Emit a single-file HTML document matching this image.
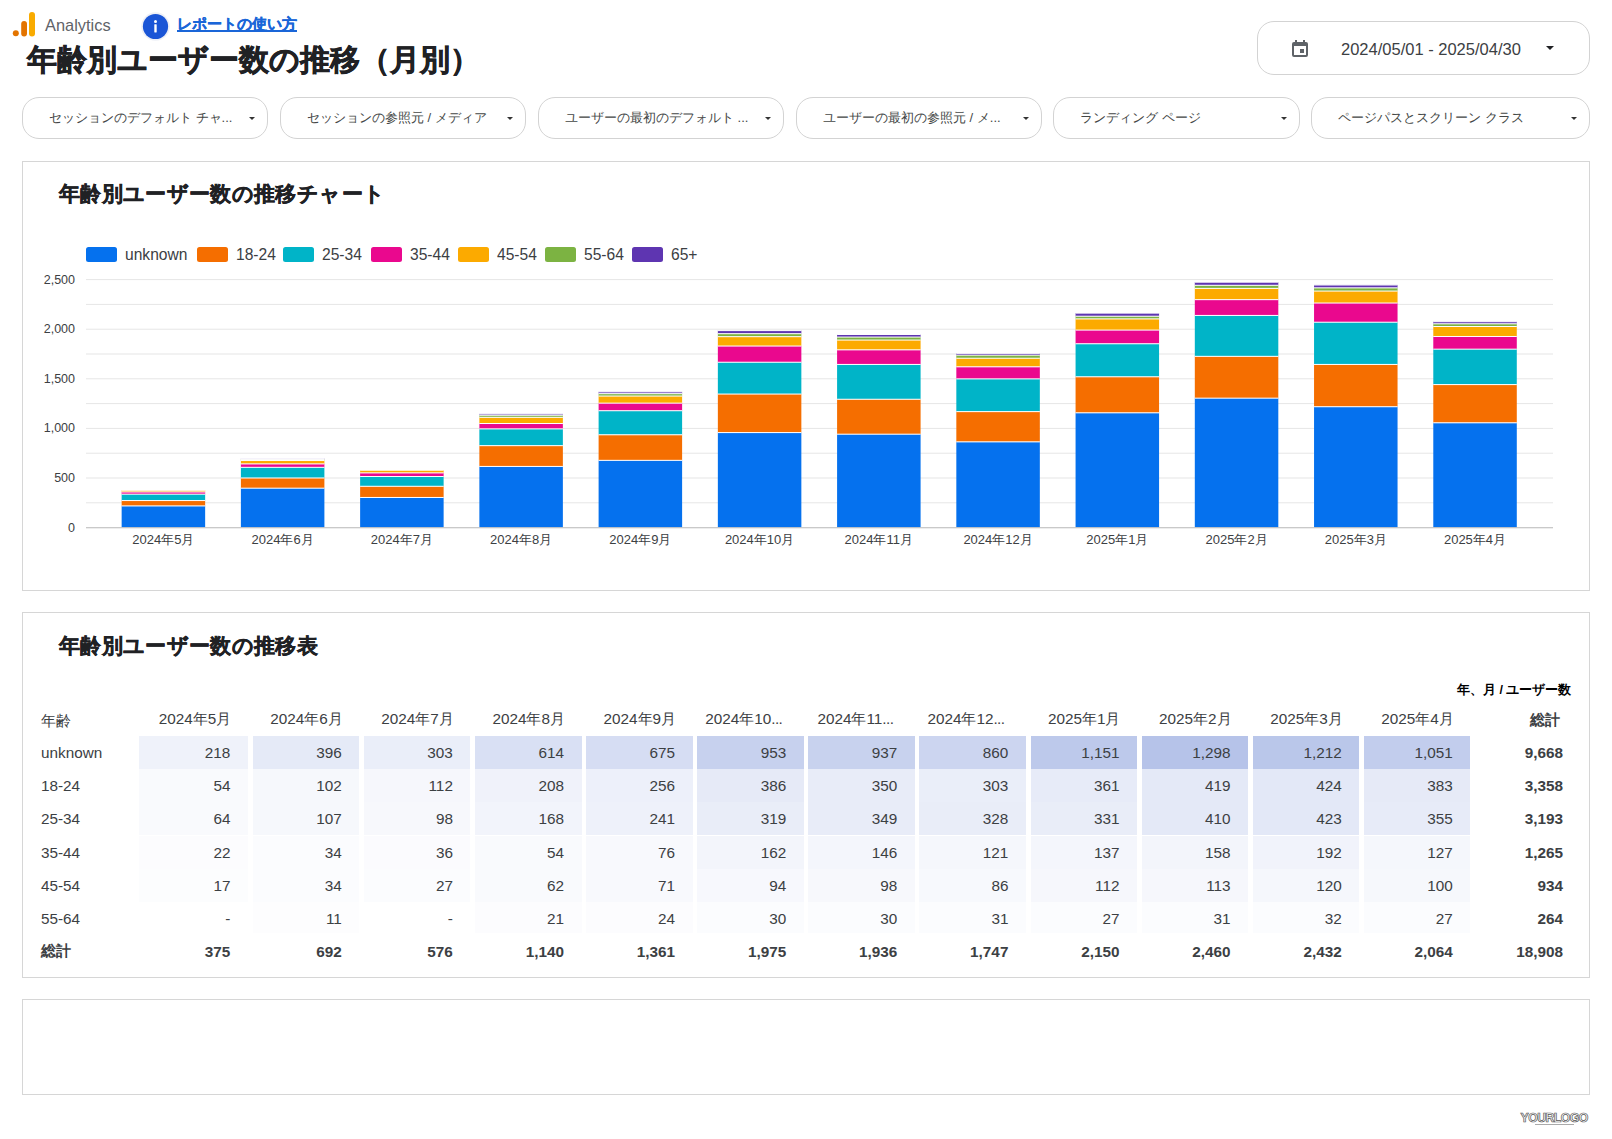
<!DOCTYPE html><html lang="ja"><head><meta charset="utf-8"><style>
*{box-sizing:border-box}
html,body{margin:0;padding:0;background:#fff}
body{width:1612px;height:1139px;position:relative;overflow:hidden;font-family:"Liberation Sans",sans-serif;color:#3c4043}
.abs{position:absolute;white-space:nowrap}
.card{position:absolute;border:1px solid #d6d6d6;background:#fff}
.chip{position:absolute;top:97px;height:42px;border:1px solid #d3d3d3;border-radius:17px;background:#fff}
.chip span{position:absolute;left:26px;top:11px;font-size:13px;letter-spacing:0px;color:#444746}
.chip i{position:absolute;right:12px;top:18.5px;width:0;height:0;border-left:3px solid transparent;border-right:3px solid transparent;border-top:3.5px solid #333}
.ct{font-size:20.6px;letter-spacing:0.35px;font-weight:bold;color:#202124;-webkit-text-stroke:0.4px #202124}
</style></head><body>
<svg class="abs" style="left:12px;top:12px" width="24" height="26" viewBox="0 0 24 26">
<rect x="17" y="0" width="6" height="24.5" rx="3" fill="#f9ab00"/>
<rect x="9.2" y="9" width="5.8" height="15.5" rx="2.9" fill="#e37400"/>
<circle cx="3.8" cy="21.3" r="3" fill="#e37400"/></svg>
<div class="abs" style="left:45px;top:16px;font-size:16.4px;color:#5f6368">Analytics</div>
<svg class="abs" style="left:141px;top:12px" width="29" height="29" viewBox="0 0 29 29">
<circle cx="14.5" cy="14.5" r="14.3" fill="#eef0f6"/><circle cx="14.5" cy="14.5" r="12.6" fill="#1a55d6"/>
<rect x="13.3" y="12.3" width="2.4" height="8.2" rx="0.4" fill="#fff"/><circle cx="14.5" cy="9.4" r="1.5" fill="#fff"/></svg>
<div class="abs" style="left:177px;top:14.5px;font-size:15px;font-weight:bold;color:#1a66d8;-webkit-text-stroke:0.3px #1a66d8;text-decoration:underline;text-decoration-thickness:1.5px;text-underline-offset:1px">レポートの使い方</div>
<div class="abs" style="left:27px;top:40px;font-size:30px;font-weight:bold;color:#202124;-webkit-text-stroke:0.6px #202124">年齢別ユーザー数の推移（月別）</div>
<div class="abs" style="left:1257px;top:21px;width:333px;height:54px;border:1px solid #d3d3d3;border-radius:17px"></div>
<svg class="abs" style="left:1291px;top:39px" width="18" height="19" viewBox="0 0 18 19"><path d="M4 1v2H3a2 2 0 0 0-2 2v11a2 2 0 0 0 2 2h12a2 2 0 0 0 2-2V5a2 2 0 0 0-2-2h-1V1h-2v2H6V1zM3 7h12v9H3z" fill="#5f6368"/><rect x="9" y="10" width="4" height="4" fill="#5f6368"/></svg>
<div class="abs" style="left:1341px;top:39.5px;font-size:16.5px;color:#3c4043">2024/05/01 - 2025/04/30</div>
<div class="abs" style="left:1546px;top:46px;width:0;height:0;border-left:4px solid transparent;border-right:4px solid transparent;border-top:4px solid #202124"></div>
<div class="chip" style="left:22px;width:246px"><span>セッションのデフォルト チャ...</span><i></i></div>
<div class="chip" style="left:280px;width:246px"><span>セッションの参照元 / メディア</span><i></i></div>
<div class="chip" style="left:538px;width:246px"><span>ユーザーの最初のデフォルト ...</span><i></i></div>
<div class="chip" style="left:796px;width:246px"><span>ユーザーの最初の参照元 / メ...</span><i></i></div>
<div class="chip" style="left:1053px;width:247px"><span>ランディング ページ</span><i></i></div>
<div class="chip" style="left:1311px;width:279px"><span>ページパスとスクリーン クラス</span><i></i></div>
<div class="card" style="left:22px;top:161px;width:1568px;height:430px"></div>
<div class="abs ct" style="left:59px;top:180px">年齢別ユーザー数の推移チャート</div>
<div class="abs" style="left:86px;top:246.5px;width:31px;height:15px;border-radius:2.5px;background:#0571ee"></div>
<div class="abs" style="left:125px;top:246px;font-size:15.6px;color:#3c4043">unknown</div>
<div class="abs" style="left:197px;top:246.5px;width:31px;height:15px;border-radius:2.5px;background:#f56e00"></div>
<div class="abs" style="left:236px;top:246px;font-size:15.6px;color:#3c4043">18-24</div>
<div class="abs" style="left:283px;top:246.5px;width:31px;height:15px;border-radius:2.5px;background:#00b4c8"></div>
<div class="abs" style="left:322px;top:246px;font-size:15.6px;color:#3c4043">25-34</div>
<div class="abs" style="left:371px;top:246.5px;width:31px;height:15px;border-radius:2.5px;background:#ea088e"></div>
<div class="abs" style="left:410px;top:246px;font-size:15.6px;color:#3c4043">35-44</div>
<div class="abs" style="left:458px;top:246.5px;width:31px;height:15px;border-radius:2.5px;background:#fcaa00"></div>
<div class="abs" style="left:497px;top:246px;font-size:15.6px;color:#3c4043">45-54</div>
<div class="abs" style="left:545px;top:246.5px;width:31px;height:15px;border-radius:2.5px;background:#7cb342"></div>
<div class="abs" style="left:584px;top:246px;font-size:15.6px;color:#3c4043">55-64</div>
<div class="abs" style="left:632px;top:246.5px;width:31px;height:15px;border-radius:2.5px;background:#5e35b1"></div>
<div class="abs" style="left:671px;top:246px;font-size:15.6px;color:#3c4043">65+</div>
<svg class="abs" style="left:0;top:0" width="1612" height="600"><rect x="86" y="502.30" width="1467" height="1" fill="#e6e6e6"/><rect x="86" y="477.50" width="1467" height="1" fill="#e6e6e6"/><rect x="86" y="452.70" width="1467" height="1" fill="#e6e6e6"/><rect x="86" y="427.90" width="1467" height="1" fill="#e6e6e6"/><rect x="86" y="403.10" width="1467" height="1" fill="#e6e6e6"/><rect x="86" y="378.30" width="1467" height="1" fill="#e6e6e6"/><rect x="86" y="353.50" width="1467" height="1" fill="#e6e6e6"/><rect x="86" y="328.70" width="1467" height="1" fill="#e6e6e6"/><rect x="86" y="303.90" width="1467" height="1" fill="#e6e6e6"/><rect x="86" y="279.10" width="1467" height="1" fill="#e6e6e6"/><rect x="121.65" y="505.84" width="83.5" height="21.76" fill="#0571ee"/><rect x="121.65" y="500.45" width="83.5" height="5.39" fill="#f56e00"/><rect x="121.65" y="494.07" width="83.5" height="6.39" fill="#00b4c8"/><rect x="121.65" y="491.87" width="83.5" height="2.20" fill="#ea088e"/><rect x="121.65" y="490.18" width="83.5" height="1.70" fill="#fcaa00"/><rect x="121.65" y="505.44" width="83.5" height="1" fill="#fff" fill-opacity="1"/><rect x="121.65" y="500.05" width="83.5" height="1" fill="#fff" fill-opacity="1"/><rect x="121.65" y="493.67" width="83.5" height="1" fill="#fff" fill-opacity="1"/><rect x="121.65" y="491.47" width="83.5" height="1" fill="#fff" fill-opacity="1"/><rect x="121.65" y="489.78" width="83.5" height="1" fill="#fff" fill-opacity="1"/><rect x="240.89" y="488.08" width="83.5" height="39.52" fill="#0571ee"/><rect x="240.89" y="477.90" width="83.5" height="10.18" fill="#f56e00"/><rect x="240.89" y="467.22" width="83.5" height="10.68" fill="#00b4c8"/><rect x="240.89" y="463.83" width="83.5" height="3.39" fill="#ea088e"/><rect x="240.89" y="460.43" width="83.5" height="3.39" fill="#fcaa00"/><rect x="240.89" y="459.34" width="83.5" height="1.10" fill="#7cb342"/><rect x="240.89" y="458.54" width="83.5" height="0.80" fill="#5e35b1"/><rect x="240.89" y="487.68" width="83.5" height="1" fill="#fff" fill-opacity="1"/><rect x="240.89" y="477.50" width="83.5" height="1" fill="#fff" fill-opacity="1"/><rect x="240.89" y="466.82" width="83.5" height="1" fill="#fff" fill-opacity="1"/><rect x="240.89" y="463.43" width="83.5" height="1" fill="#fff" fill-opacity="1"/><rect x="240.89" y="460.03" width="83.5" height="1" fill="#fff" fill-opacity="1"/><rect x="240.89" y="458.94" width="83.5" height="1" fill="#fff" fill-opacity="1"/><rect x="240.89" y="458.14" width="83.5" height="1" fill="#fff" fill-opacity="1"/><rect x="360.13" y="497.36" width="83.5" height="30.24" fill="#0571ee"/><rect x="360.13" y="486.18" width="83.5" height="11.18" fill="#f56e00"/><rect x="360.13" y="476.40" width="83.5" height="9.78" fill="#00b4c8"/><rect x="360.13" y="472.81" width="83.5" height="3.59" fill="#ea088e"/><rect x="360.13" y="470.12" width="83.5" height="2.69" fill="#fcaa00"/><rect x="360.13" y="496.96" width="83.5" height="1" fill="#fff" fill-opacity="1"/><rect x="360.13" y="485.78" width="83.5" height="1" fill="#fff" fill-opacity="1"/><rect x="360.13" y="476.00" width="83.5" height="1" fill="#fff" fill-opacity="1"/><rect x="360.13" y="472.41" width="83.5" height="1" fill="#fff" fill-opacity="1"/><rect x="360.13" y="469.72" width="83.5" height="1" fill="#fff" fill-opacity="1"/><rect x="479.37" y="466.32" width="83.5" height="61.28" fill="#0571ee"/><rect x="479.37" y="445.56" width="83.5" height="20.76" fill="#f56e00"/><rect x="479.37" y="428.80" width="83.5" height="16.77" fill="#00b4c8"/><rect x="479.37" y="423.41" width="83.5" height="5.39" fill="#ea088e"/><rect x="479.37" y="417.22" width="83.5" height="6.19" fill="#fcaa00"/><rect x="479.37" y="415.13" width="83.5" height="2.10" fill="#7cb342"/><rect x="479.37" y="413.83" width="83.5" height="1.30" fill="#5e35b1"/><rect x="479.37" y="465.92" width="83.5" height="1" fill="#fff" fill-opacity="1"/><rect x="479.37" y="445.16" width="83.5" height="1" fill="#fff" fill-opacity="1"/><rect x="479.37" y="428.40" width="83.5" height="1" fill="#fff" fill-opacity="1"/><rect x="479.37" y="423.01" width="83.5" height="1" fill="#fff" fill-opacity="1"/><rect x="479.37" y="416.82" width="83.5" height="1" fill="#fff" fill-opacity="1"/><rect x="479.37" y="414.73" width="83.5" height="1" fill="#fff" fill-opacity="1"/><rect x="479.37" y="413.43" width="83.5" height="1" fill="#fff" fill-opacity="1"/><rect x="598.61" y="460.24" width="83.5" height="67.36" fill="#0571ee"/><rect x="598.61" y="434.69" width="83.5" height="25.55" fill="#f56e00"/><rect x="598.61" y="410.63" width="83.5" height="24.05" fill="#00b4c8"/><rect x="598.61" y="403.05" width="83.5" height="7.58" fill="#ea088e"/><rect x="598.61" y="395.96" width="83.5" height="7.09" fill="#fcaa00"/><rect x="598.61" y="393.57" width="83.5" height="2.40" fill="#7cb342"/><rect x="598.61" y="391.77" width="83.5" height="1.80" fill="#5e35b1"/><rect x="598.61" y="459.84" width="83.5" height="1" fill="#fff" fill-opacity="1"/><rect x="598.61" y="434.29" width="83.5" height="1" fill="#fff" fill-opacity="1"/><rect x="598.61" y="410.23" width="83.5" height="1" fill="#fff" fill-opacity="1"/><rect x="598.61" y="402.65" width="83.5" height="1" fill="#fff" fill-opacity="1"/><rect x="598.61" y="395.56" width="83.5" height="1" fill="#fff" fill-opacity="1"/><rect x="598.61" y="393.17" width="83.5" height="1" fill="#fff" fill-opacity="1"/><rect x="598.61" y="391.37" width="83.5" height="1" fill="#fff" fill-opacity="1"/><rect x="717.85" y="432.49" width="83.5" height="95.11" fill="#0571ee"/><rect x="717.85" y="393.97" width="83.5" height="38.52" fill="#f56e00"/><rect x="717.85" y="362.13" width="83.5" height="31.84" fill="#00b4c8"/><rect x="717.85" y="345.96" width="83.5" height="16.17" fill="#ea088e"/><rect x="717.85" y="336.58" width="83.5" height="9.38" fill="#fcaa00"/><rect x="717.85" y="333.59" width="83.5" height="2.99" fill="#7cb342"/><rect x="717.85" y="330.50" width="83.5" height="3.09" fill="#5e35b1"/><rect x="717.85" y="432.09" width="83.5" height="1" fill="#fff" fill-opacity="1"/><rect x="717.85" y="393.57" width="83.5" height="1" fill="#fff" fill-opacity="1"/><rect x="717.85" y="361.73" width="83.5" height="1" fill="#fff" fill-opacity="1"/><rect x="717.85" y="345.56" width="83.5" height="1" fill="#fff" fill-opacity="1"/><rect x="717.85" y="336.18" width="83.5" height="1" fill="#fff" fill-opacity="1"/><rect x="717.85" y="333.19" width="83.5" height="1" fill="#fff" fill-opacity="1"/><rect x="717.85" y="330.10" width="83.5" height="1" fill="#fff" fill-opacity="1"/><rect x="837.09" y="434.09" width="83.5" height="93.51" fill="#0571ee"/><rect x="837.09" y="399.16" width="83.5" height="34.93" fill="#f56e00"/><rect x="837.09" y="364.33" width="83.5" height="34.83" fill="#00b4c8"/><rect x="837.09" y="349.76" width="83.5" height="14.57" fill="#ea088e"/><rect x="837.09" y="339.98" width="83.5" height="9.78" fill="#fcaa00"/><rect x="837.09" y="336.98" width="83.5" height="2.99" fill="#7cb342"/><rect x="837.09" y="334.39" width="83.5" height="2.59" fill="#5e35b1"/><rect x="837.09" y="433.69" width="83.5" height="1" fill="#fff" fill-opacity="1"/><rect x="837.09" y="398.76" width="83.5" height="1" fill="#fff" fill-opacity="1"/><rect x="837.09" y="363.93" width="83.5" height="1" fill="#fff" fill-opacity="1"/><rect x="837.09" y="349.36" width="83.5" height="1" fill="#fff" fill-opacity="1"/><rect x="837.09" y="339.58" width="83.5" height="1" fill="#fff" fill-opacity="1"/><rect x="837.09" y="336.58" width="83.5" height="1" fill="#fff" fill-opacity="1"/><rect x="837.09" y="333.99" width="83.5" height="1" fill="#fff" fill-opacity="1"/><rect x="956.33" y="441.77" width="83.5" height="85.83" fill="#0571ee"/><rect x="956.33" y="411.53" width="83.5" height="30.24" fill="#f56e00"/><rect x="956.33" y="378.80" width="83.5" height="32.73" fill="#00b4c8"/><rect x="956.33" y="366.72" width="83.5" height="12.08" fill="#ea088e"/><rect x="956.33" y="358.14" width="83.5" height="8.58" fill="#fcaa00"/><rect x="956.33" y="355.05" width="83.5" height="3.09" fill="#7cb342"/><rect x="956.33" y="353.25" width="83.5" height="1.80" fill="#5e35b1"/><rect x="956.33" y="441.37" width="83.5" height="1" fill="#fff" fill-opacity="1"/><rect x="956.33" y="411.13" width="83.5" height="1" fill="#fff" fill-opacity="1"/><rect x="956.33" y="378.40" width="83.5" height="1" fill="#fff" fill-opacity="1"/><rect x="956.33" y="366.32" width="83.5" height="1" fill="#fff" fill-opacity="1"/><rect x="956.33" y="357.74" width="83.5" height="1" fill="#fff" fill-opacity="1"/><rect x="956.33" y="354.65" width="83.5" height="1" fill="#fff" fill-opacity="1"/><rect x="956.33" y="352.85" width="83.5" height="1" fill="#fff" fill-opacity="1"/><rect x="1075.57" y="412.73" width="83.5" height="114.87" fill="#0571ee"/><rect x="1075.57" y="376.70" width="83.5" height="36.03" fill="#f56e00"/><rect x="1075.57" y="343.67" width="83.5" height="33.03" fill="#00b4c8"/><rect x="1075.57" y="330.00" width="83.5" height="13.67" fill="#ea088e"/><rect x="1075.57" y="318.82" width="83.5" height="11.18" fill="#fcaa00"/><rect x="1075.57" y="316.12" width="83.5" height="2.69" fill="#7cb342"/><rect x="1075.57" y="313.03" width="83.5" height="3.09" fill="#5e35b1"/><rect x="1075.57" y="412.33" width="83.5" height="1" fill="#fff" fill-opacity="1"/><rect x="1075.57" y="376.30" width="83.5" height="1" fill="#fff" fill-opacity="1"/><rect x="1075.57" y="343.27" width="83.5" height="1" fill="#fff" fill-opacity="1"/><rect x="1075.57" y="329.60" width="83.5" height="1" fill="#fff" fill-opacity="1"/><rect x="1075.57" y="318.42" width="83.5" height="1" fill="#fff" fill-opacity="1"/><rect x="1075.57" y="315.72" width="83.5" height="1" fill="#fff" fill-opacity="1"/><rect x="1075.57" y="312.63" width="83.5" height="1" fill="#fff" fill-opacity="1"/><rect x="1194.81" y="398.06" width="83.5" height="129.54" fill="#0571ee"/><rect x="1194.81" y="356.24" width="83.5" height="41.82" fill="#f56e00"/><rect x="1194.81" y="315.33" width="83.5" height="40.92" fill="#00b4c8"/><rect x="1194.81" y="299.56" width="83.5" height="15.77" fill="#ea088e"/><rect x="1194.81" y="288.28" width="83.5" height="11.28" fill="#fcaa00"/><rect x="1194.81" y="285.19" width="83.5" height="3.09" fill="#7cb342"/><rect x="1194.81" y="282.09" width="83.5" height="3.09" fill="#5e35b1"/><rect x="1194.81" y="397.66" width="83.5" height="1" fill="#fff" fill-opacity="1"/><rect x="1194.81" y="355.84" width="83.5" height="1" fill="#fff" fill-opacity="1"/><rect x="1194.81" y="314.93" width="83.5" height="1" fill="#fff" fill-opacity="1"/><rect x="1194.81" y="299.16" width="83.5" height="1" fill="#fff" fill-opacity="1"/><rect x="1194.81" y="287.88" width="83.5" height="1" fill="#fff" fill-opacity="1"/><rect x="1194.81" y="284.79" width="83.5" height="1" fill="#fff" fill-opacity="1"/><rect x="1194.81" y="281.69" width="83.5" height="1" fill="#fff" fill-opacity="1"/><rect x="1314.05" y="406.64" width="83.5" height="120.96" fill="#0571ee"/><rect x="1314.05" y="364.33" width="83.5" height="42.32" fill="#f56e00"/><rect x="1314.05" y="322.11" width="83.5" height="42.22" fill="#00b4c8"/><rect x="1314.05" y="302.95" width="83.5" height="19.16" fill="#ea088e"/><rect x="1314.05" y="290.97" width="83.5" height="11.98" fill="#fcaa00"/><rect x="1314.05" y="287.78" width="83.5" height="3.19" fill="#7cb342"/><rect x="1314.05" y="284.89" width="83.5" height="2.89" fill="#5e35b1"/><rect x="1314.05" y="406.24" width="83.5" height="1" fill="#fff" fill-opacity="1"/><rect x="1314.05" y="363.93" width="83.5" height="1" fill="#fff" fill-opacity="1"/><rect x="1314.05" y="321.71" width="83.5" height="1" fill="#fff" fill-opacity="1"/><rect x="1314.05" y="302.55" width="83.5" height="1" fill="#fff" fill-opacity="1"/><rect x="1314.05" y="290.57" width="83.5" height="1" fill="#fff" fill-opacity="1"/><rect x="1314.05" y="287.38" width="83.5" height="1" fill="#fff" fill-opacity="1"/><rect x="1314.05" y="284.49" width="83.5" height="1" fill="#fff" fill-opacity="1"/><rect x="1433.29" y="422.71" width="83.5" height="104.89" fill="#0571ee"/><rect x="1433.29" y="384.49" width="83.5" height="38.22" fill="#f56e00"/><rect x="1433.29" y="349.06" width="83.5" height="35.43" fill="#00b4c8"/><rect x="1433.29" y="336.38" width="83.5" height="12.67" fill="#ea088e"/><rect x="1433.29" y="326.40" width="83.5" height="9.98" fill="#fcaa00"/><rect x="1433.29" y="323.71" width="83.5" height="2.69" fill="#7cb342"/><rect x="1433.29" y="321.61" width="83.5" height="2.10" fill="#5e35b1"/><rect x="1433.29" y="422.31" width="83.5" height="1" fill="#fff" fill-opacity="1"/><rect x="1433.29" y="384.09" width="83.5" height="1" fill="#fff" fill-opacity="1"/><rect x="1433.29" y="348.66" width="83.5" height="1" fill="#fff" fill-opacity="1"/><rect x="1433.29" y="335.98" width="83.5" height="1" fill="#fff" fill-opacity="1"/><rect x="1433.29" y="326.00" width="83.5" height="1" fill="#fff" fill-opacity="1"/><rect x="1433.29" y="323.31" width="83.5" height="1" fill="#fff" fill-opacity="1"/><rect x="1433.29" y="321.21" width="83.5" height="1" fill="#fff" fill-opacity="1"/><rect x="86" y="527.10" width="1467" height="1.2" fill="#c4c4c4"/></svg>
<div class="abs" style="left:0;width:75px;text-align:right;top:520.6px;font-size:12.5px;color:#3c4043">0</div>
<div class="abs" style="left:0;width:75px;text-align:right;top:471.0px;font-size:12.5px;color:#3c4043">500</div>
<div class="abs" style="left:0;width:75px;text-align:right;top:421.4px;font-size:12.5px;color:#3c4043">1,000</div>
<div class="abs" style="left:0;width:75px;text-align:right;top:371.8px;font-size:12.5px;color:#3c4043">1,500</div>
<div class="abs" style="left:0;width:75px;text-align:right;top:322.2px;font-size:12.5px;color:#3c4043">2,000</div>
<div class="abs" style="left:0;width:75px;text-align:right;top:272.6px;font-size:12.5px;color:#3c4043">2,500</div>
<div class="abs" style="left:103.4px;width:120px;text-align:center;top:531px;font-size:13px;color:#3c4043">2024年5月</div>
<div class="abs" style="left:222.6px;width:120px;text-align:center;top:531px;font-size:13px;color:#3c4043">2024年6月</div>
<div class="abs" style="left:341.9px;width:120px;text-align:center;top:531px;font-size:13px;color:#3c4043">2024年7月</div>
<div class="abs" style="left:461.1px;width:120px;text-align:center;top:531px;font-size:13px;color:#3c4043">2024年8月</div>
<div class="abs" style="left:580.4px;width:120px;text-align:center;top:531px;font-size:13px;color:#3c4043">2024年9月</div>
<div class="abs" style="left:699.6px;width:120px;text-align:center;top:531px;font-size:13px;color:#3c4043">2024年10月</div>
<div class="abs" style="left:818.8px;width:120px;text-align:center;top:531px;font-size:13px;color:#3c4043">2024年11月</div>
<div class="abs" style="left:938.1px;width:120px;text-align:center;top:531px;font-size:13px;color:#3c4043">2024年12月</div>
<div class="abs" style="left:1057.3px;width:120px;text-align:center;top:531px;font-size:13px;color:#3c4043">2025年1月</div>
<div class="abs" style="left:1176.6px;width:120px;text-align:center;top:531px;font-size:13px;color:#3c4043">2025年2月</div>
<div class="abs" style="left:1295.8px;width:120px;text-align:center;top:531px;font-size:13px;color:#3c4043">2025年3月</div>
<div class="abs" style="left:1415.0px;width:120px;text-align:center;top:531px;font-size:13px;color:#3c4043">2025年4月</div>
<div class="card" style="left:22px;top:612px;width:1568px;height:366px"></div>
<div class="abs ct" style="left:59px;top:632px">年齢別ユーザー数の推移表</div>
<div class="abs" style="left:1457px;top:682px;font-size:12.5px;font-weight:bold;color:#000">年、月 / ユーザー数</div>
<div class="abs" style="left:41px;top:711px;font-size:15.3px;color:#3c4043">年齢</div>
<div class="abs" style="left:139.4px;width:108.5px;padding-right:16.5px;text-align:right;top:709px;font-size:15.3px;color:#3c4043">2024年5月</div>
<div class="abs" style="left:252.8px;width:106.5px;padding-right:16.5px;text-align:right;top:709px;font-size:15.3px;color:#3c4043">2024年6月</div>
<div class="abs" style="left:363.9px;width:106.5px;padding-right:16.5px;text-align:right;top:709px;font-size:15.3px;color:#3c4043">2024年7月</div>
<div class="abs" style="left:475.0px;width:106.5px;padding-right:16.5px;text-align:right;top:709px;font-size:15.3px;color:#3c4043">2024年8月</div>
<div class="abs" style="left:586.0999999999999px;width:106.5px;padding-right:16.5px;text-align:right;top:709px;font-size:15.3px;color:#3c4043">2024年9月</div>
<div class="abs" style="left:697.2px;width:106.5px;padding-right:21.5px;text-align:right;top:709px;font-size:15.3px;color:#3c4043">2024年10<span style="letter-spacing:-0.6px">...</span></div>
<div class="abs" style="left:808.3px;width:106.5px;padding-right:21.5px;text-align:right;top:709px;font-size:15.3px;color:#3c4043">2024年11<span style="letter-spacing:-0.6px">...</span></div>
<div class="abs" style="left:919.3999999999999px;width:106.5px;padding-right:21.5px;text-align:right;top:709px;font-size:15.3px;color:#3c4043">2024年12<span style="letter-spacing:-0.6px">...</span></div>
<div class="abs" style="left:1030.5px;width:106.5px;padding-right:16.5px;text-align:right;top:709px;font-size:15.3px;color:#3c4043">2025年1月</div>
<div class="abs" style="left:1141.6px;width:106.5px;padding-right:16.5px;text-align:right;top:709px;font-size:15.3px;color:#3c4043">2025年2月</div>
<div class="abs" style="left:1252.7px;width:106.5px;padding-right:16.5px;text-align:right;top:709px;font-size:15.3px;color:#3c4043">2025年3月</div>
<div class="abs" style="left:1363.8px;width:106.5px;padding-right:16.5px;text-align:right;top:709px;font-size:15.3px;color:#3c4043">2025年4月</div>
<div class="abs" style="left:1470px;width:101px;padding-right:11px;text-align:right;top:710px;font-size:15.3px;font-weight:bold;color:#3c4043">総計</div>
<div class="abs" style="left:41px;top:744.0px;font-size:15.3px;color:#3c4043">unknown</div>
<div class="abs" style="left:139.4px;width:108.5px;height:33.15px;top:736.0px;background:rgb(239, 242, 250);text-align:right;padding-right:17.5px;padding-top:8px;font-size:15.3px;color:#3c4043">218</div>
<div class="abs" style="left:252.8px;width:106.5px;height:33.15px;top:736.0px;background:rgb(229, 234, 247);text-align:right;padding-right:17.5px;padding-top:8px;font-size:15.3px;color:#3c4043">396</div>
<div class="abs" style="left:363.9px;width:106.5px;height:33.15px;top:736.0px;background:rgb(234, 238, 249);text-align:right;padding-right:17.5px;padding-top:8px;font-size:15.3px;color:#3c4043">303</div>
<div class="abs" style="left:475.0px;width:106.5px;height:33.15px;top:736.0px;background:rgb(217, 224, 244);text-align:right;padding-right:17.5px;padding-top:8px;font-size:15.3px;color:#3c4043">614</div>
<div class="abs" style="left:586.1px;width:106.5px;height:33.15px;top:736.0px;background:rgb(214, 221, 243);text-align:right;padding-right:17.5px;padding-top:8px;font-size:15.3px;color:#3c4043">675</div>
<div class="abs" style="left:697.2px;width:106.5px;height:33.15px;top:736.0px;background:rgb(199, 209, 238);text-align:right;padding-right:17.5px;padding-top:8px;font-size:15.3px;color:#3c4043">953</div>
<div class="abs" style="left:808.3px;width:106.5px;height:33.15px;top:736.0px;background:rgb(200, 210, 238);text-align:right;padding-right:17.5px;padding-top:8px;font-size:15.3px;color:#3c4043">937</div>
<div class="abs" style="left:919.4px;width:106.5px;height:33.15px;top:736.0px;background:rgb(204, 213, 240);text-align:right;padding-right:17.5px;padding-top:8px;font-size:15.3px;color:#3c4043">860</div>
<div class="abs" style="left:1030.5px;width:106.5px;height:33.15px;top:736.0px;background:rgb(189, 201, 235);text-align:right;padding-right:17.5px;padding-top:8px;font-size:15.3px;color:#3c4043">1,151</div>
<div class="abs" style="left:1141.6px;width:106.5px;height:33.15px;top:736.0px;background:rgb(182, 195, 233);text-align:right;padding-right:17.5px;padding-top:8px;font-size:15.3px;color:#3c4043">1,298</div>
<div class="abs" style="left:1252.7px;width:106.5px;height:33.15px;top:736.0px;background:rgb(186, 199, 234);text-align:right;padding-right:17.5px;padding-top:8px;font-size:15.3px;color:#3c4043">1,212</div>
<div class="abs" style="left:1363.8px;width:106.5px;height:33.15px;top:736.0px;background:rgb(194, 205, 237);text-align:right;padding-right:17.5px;padding-top:8px;font-size:15.3px;color:#3c4043">1,051</div>
<div class="abs" style="left:1470px;width:101px;padding-right:8px;text-align:right;top:744.0px;font-size:15.3px;font-weight:bold;color:#3c4043">9,668</div>
<div class="abs" style="left:41px;top:777.1px;font-size:15.3px;color:#3c4043">18-24</div>
<div class="abs" style="left:139.4px;width:108.5px;height:33.15px;top:769.1px;background:rgb(249, 250, 253);text-align:right;padding-right:17.5px;padding-top:8px;font-size:15.3px;color:#3c4043">54</div>
<div class="abs" style="left:252.8px;width:106.5px;height:33.15px;top:769.1px;background:rgb(246, 248, 252);text-align:right;padding-right:17.5px;padding-top:8px;font-size:15.3px;color:#3c4043">102</div>
<div class="abs" style="left:363.9px;width:106.5px;height:33.15px;top:769.1px;background:rgb(246, 247, 252);text-align:right;padding-right:17.5px;padding-top:8px;font-size:15.3px;color:#3c4043">112</div>
<div class="abs" style="left:475.0px;width:106.5px;height:33.15px;top:769.1px;background:rgb(240, 242, 250);text-align:right;padding-right:17.5px;padding-top:8px;font-size:15.3px;color:#3c4043">208</div>
<div class="abs" style="left:586.1px;width:106.5px;height:33.15px;top:769.1px;background:rgb(237, 240, 250);text-align:right;padding-right:17.5px;padding-top:8px;font-size:15.3px;color:#3c4043">256</div>
<div class="abs" style="left:697.2px;width:106.5px;height:33.15px;top:769.1px;background:rgb(230, 234, 247);text-align:right;padding-right:17.5px;padding-top:8px;font-size:15.3px;color:#3c4043">386</div>
<div class="abs" style="left:808.3px;width:106.5px;height:33.15px;top:769.1px;background:rgb(232, 236, 248);text-align:right;padding-right:17.5px;padding-top:8px;font-size:15.3px;color:#3c4043">350</div>
<div class="abs" style="left:919.4px;width:106.5px;height:33.15px;top:769.1px;background:rgb(234, 238, 249);text-align:right;padding-right:17.5px;padding-top:8px;font-size:15.3px;color:#3c4043">303</div>
<div class="abs" style="left:1030.5px;width:106.5px;height:33.15px;top:769.1px;background:rgb(231, 235, 248);text-align:right;padding-right:17.5px;padding-top:8px;font-size:15.3px;color:#3c4043">361</div>
<div class="abs" style="left:1141.6px;width:106.5px;height:33.15px;top:769.1px;background:rgb(228, 233, 247);text-align:right;padding-right:17.5px;padding-top:8px;font-size:15.3px;color:#3c4043">419</div>
<div class="abs" style="left:1252.7px;width:106.5px;height:33.15px;top:769.1px;background:rgb(227, 232, 247);text-align:right;padding-right:17.5px;padding-top:8px;font-size:15.3px;color:#3c4043">424</div>
<div class="abs" style="left:1363.8px;width:106.5px;height:33.15px;top:769.1px;background:rgb(230, 234, 247);text-align:right;padding-right:17.5px;padding-top:8px;font-size:15.3px;color:#3c4043">383</div>
<div class="abs" style="left:1470px;width:101px;padding-right:8px;text-align:right;top:777.1px;font-size:15.3px;font-weight:bold;color:#3c4043">3,358</div>
<div class="abs" style="left:41px;top:810.3px;font-size:15.3px;color:#3c4043">25-34</div>
<div class="abs" style="left:139.4px;width:108.5px;height:33.15px;top:802.3px;background:rgb(249, 250, 253);text-align:right;padding-right:17.5px;padding-top:8px;font-size:15.3px;color:#3c4043">64</div>
<div class="abs" style="left:252.8px;width:106.5px;height:33.15px;top:802.3px;background:rgb(246, 248, 252);text-align:right;padding-right:17.5px;padding-top:8px;font-size:15.3px;color:#3c4043">107</div>
<div class="abs" style="left:363.9px;width:106.5px;height:33.15px;top:802.3px;background:rgb(247, 248, 252);text-align:right;padding-right:17.5px;padding-top:8px;font-size:15.3px;color:#3c4043">98</div>
<div class="abs" style="left:475.0px;width:106.5px;height:33.15px;top:802.3px;background:rgb(242, 244, 251);text-align:right;padding-right:17.5px;padding-top:8px;font-size:15.3px;color:#3c4043">168</div>
<div class="abs" style="left:586.1px;width:106.5px;height:33.15px;top:802.3px;background:rgb(238, 241, 250);text-align:right;padding-right:17.5px;padding-top:8px;font-size:15.3px;color:#3c4043">241</div>
<div class="abs" style="left:697.2px;width:106.5px;height:33.15px;top:802.3px;background:rgb(233, 237, 248);text-align:right;padding-right:17.5px;padding-top:8px;font-size:15.3px;color:#3c4043">319</div>
<div class="abs" style="left:808.3px;width:106.5px;height:33.15px;top:802.3px;background:rgb(232, 236, 248);text-align:right;padding-right:17.5px;padding-top:8px;font-size:15.3px;color:#3c4043">349</div>
<div class="abs" style="left:919.4px;width:106.5px;height:33.15px;top:802.3px;background:rgb(233, 237, 248);text-align:right;padding-right:17.5px;padding-top:8px;font-size:15.3px;color:#3c4043">328</div>
<div class="abs" style="left:1030.5px;width:106.5px;height:33.15px;top:802.3px;background:rgb(233, 237, 248);text-align:right;padding-right:17.5px;padding-top:8px;font-size:15.3px;color:#3c4043">331</div>
<div class="abs" style="left:1141.6px;width:106.5px;height:33.15px;top:802.3px;background:rgb(228, 233, 247);text-align:right;padding-right:17.5px;padding-top:8px;font-size:15.3px;color:#3c4043">410</div>
<div class="abs" style="left:1252.7px;width:106.5px;height:33.15px;top:802.3px;background:rgb(227, 232, 247);text-align:right;padding-right:17.5px;padding-top:8px;font-size:15.3px;color:#3c4043">423</div>
<div class="abs" style="left:1363.8px;width:106.5px;height:33.15px;top:802.3px;background:rgb(231, 235, 248);text-align:right;padding-right:17.5px;padding-top:8px;font-size:15.3px;color:#3c4043">355</div>
<div class="abs" style="left:1470px;width:101px;padding-right:8px;text-align:right;top:810.3px;font-size:15.3px;font-weight:bold;color:#3c4043">3,193</div>
<div class="abs" style="left:41px;top:843.5px;font-size:15.3px;color:#3c4043">35-44</div>
<div class="abs" style="left:139.4px;width:108.5px;height:33.15px;top:835.5px;background:rgb(252, 252, 254);text-align:right;padding-right:17.5px;padding-top:8px;font-size:15.3px;color:#3c4043">22</div>
<div class="abs" style="left:252.8px;width:106.5px;height:33.15px;top:835.5px;background:rgb(251, 252, 254);text-align:right;padding-right:17.5px;padding-top:8px;font-size:15.3px;color:#3c4043">34</div>
<div class="abs" style="left:363.9px;width:106.5px;height:33.15px;top:835.5px;background:rgb(251, 251, 254);text-align:right;padding-right:17.5px;padding-top:8px;font-size:15.3px;color:#3c4043">36</div>
<div class="abs" style="left:475.0px;width:106.5px;height:33.15px;top:835.5px;background:rgb(249, 250, 253);text-align:right;padding-right:17.5px;padding-top:8px;font-size:15.3px;color:#3c4043">54</div>
<div class="abs" style="left:586.1px;width:106.5px;height:33.15px;top:835.5px;background:rgb(248, 249, 253);text-align:right;padding-right:17.5px;padding-top:8px;font-size:15.3px;color:#3c4043">76</div>
<div class="abs" style="left:697.2px;width:106.5px;height:33.15px;top:835.5px;background:rgb(243, 245, 251);text-align:right;padding-right:17.5px;padding-top:8px;font-size:15.3px;color:#3c4043">162</div>
<div class="abs" style="left:808.3px;width:106.5px;height:33.15px;top:835.5px;background:rgb(244, 246, 252);text-align:right;padding-right:17.5px;padding-top:8px;font-size:15.3px;color:#3c4043">146</div>
<div class="abs" style="left:919.4px;width:106.5px;height:33.15px;top:835.5px;background:rgb(245, 247, 252);text-align:right;padding-right:17.5px;padding-top:8px;font-size:15.3px;color:#3c4043">121</div>
<div class="abs" style="left:1030.5px;width:106.5px;height:33.15px;top:835.5px;background:rgb(244, 246, 252);text-align:right;padding-right:17.5px;padding-top:8px;font-size:15.3px;color:#3c4043">137</div>
<div class="abs" style="left:1141.6px;width:106.5px;height:33.15px;top:835.5px;background:rgb(243, 245, 251);text-align:right;padding-right:17.5px;padding-top:8px;font-size:15.3px;color:#3c4043">158</div>
<div class="abs" style="left:1252.7px;width:106.5px;height:33.15px;top:835.5px;background:rgb(241, 243, 251);text-align:right;padding-right:17.5px;padding-top:8px;font-size:15.3px;color:#3c4043">192</div>
<div class="abs" style="left:1363.8px;width:106.5px;height:33.15px;top:835.5px;background:rgb(245, 247, 252);text-align:right;padding-right:17.5px;padding-top:8px;font-size:15.3px;color:#3c4043">127</div>
<div class="abs" style="left:1470px;width:101px;padding-right:8px;text-align:right;top:843.5px;font-size:15.3px;font-weight:bold;color:#3c4043">1,265</div>
<div class="abs" style="left:41px;top:876.6px;font-size:15.3px;color:#3c4043">45-54</div>
<div class="abs" style="left:139.4px;width:108.5px;height:33.15px;top:868.6px;background:rgb(252, 253, 254);text-align:right;padding-right:17.5px;padding-top:8px;font-size:15.3px;color:#3c4043">17</div>
<div class="abs" style="left:252.8px;width:106.5px;height:33.15px;top:868.6px;background:rgb(251, 252, 254);text-align:right;padding-right:17.5px;padding-top:8px;font-size:15.3px;color:#3c4043">34</div>
<div class="abs" style="left:363.9px;width:106.5px;height:33.15px;top:868.6px;background:rgb(251, 252, 254);text-align:right;padding-right:17.5px;padding-top:8px;font-size:15.3px;color:#3c4043">27</div>
<div class="abs" style="left:475.0px;width:106.5px;height:33.15px;top:868.6px;background:rgb(249, 250, 253);text-align:right;padding-right:17.5px;padding-top:8px;font-size:15.3px;color:#3c4043">62</div>
<div class="abs" style="left:586.1px;width:106.5px;height:33.15px;top:868.6px;background:rgb(248, 249, 253);text-align:right;padding-right:17.5px;padding-top:8px;font-size:15.3px;color:#3c4043">71</div>
<div class="abs" style="left:697.2px;width:106.5px;height:33.15px;top:868.6px;background:rgb(247, 248, 253);text-align:right;padding-right:17.5px;padding-top:8px;font-size:15.3px;color:#3c4043">94</div>
<div class="abs" style="left:808.3px;width:106.5px;height:33.15px;top:868.6px;background:rgb(247, 248, 252);text-align:right;padding-right:17.5px;padding-top:8px;font-size:15.3px;color:#3c4043">98</div>
<div class="abs" style="left:919.4px;width:106.5px;height:33.15px;top:868.6px;background:rgb(247, 249, 253);text-align:right;padding-right:17.5px;padding-top:8px;font-size:15.3px;color:#3c4043">86</div>
<div class="abs" style="left:1030.5px;width:106.5px;height:33.15px;top:868.6px;background:rgb(246, 247, 252);text-align:right;padding-right:17.5px;padding-top:8px;font-size:15.3px;color:#3c4043">112</div>
<div class="abs" style="left:1141.6px;width:106.5px;height:33.15px;top:868.6px;background:rgb(246, 247, 252);text-align:right;padding-right:17.5px;padding-top:8px;font-size:15.3px;color:#3c4043">113</div>
<div class="abs" style="left:1252.7px;width:106.5px;height:33.15px;top:868.6px;background:rgb(245, 247, 252);text-align:right;padding-right:17.5px;padding-top:8px;font-size:15.3px;color:#3c4043">120</div>
<div class="abs" style="left:1363.8px;width:106.5px;height:33.15px;top:868.6px;background:rgb(246, 248, 252);text-align:right;padding-right:17.5px;padding-top:8px;font-size:15.3px;color:#3c4043">100</div>
<div class="abs" style="left:1470px;width:101px;padding-right:8px;text-align:right;top:876.6px;font-size:15.3px;font-weight:bold;color:#3c4043">934</div>
<div class="abs" style="left:41px;top:909.8px;font-size:15.3px;color:#3c4043">55-64</div>
<div class="abs" style="left:139.4px;width:108.5px;height:31px;top:901.8px;background:rgb(255, 255, 255);text-align:right;padding-right:17.5px;padding-top:8px;font-size:15.3px;color:#3c4043">-</div>
<div class="abs" style="left:252.8px;width:106.5px;height:31px;top:901.8px;background:rgb(253, 253, 254);text-align:right;padding-right:17.5px;padding-top:8px;font-size:15.3px;color:#3c4043">11</div>
<div class="abs" style="left:363.9px;width:106.5px;height:31px;top:901.8px;background:rgb(255, 255, 255);text-align:right;padding-right:17.5px;padding-top:8px;font-size:15.3px;color:#3c4043">-</div>
<div class="abs" style="left:475.0px;width:106.5px;height:31px;top:901.8px;background:rgb(252, 252, 254);text-align:right;padding-right:17.5px;padding-top:8px;font-size:15.3px;color:#3c4043">21</div>
<div class="abs" style="left:586.1px;width:106.5px;height:31px;top:901.8px;background:rgb(252, 252, 254);text-align:right;padding-right:17.5px;padding-top:8px;font-size:15.3px;color:#3c4043">24</div>
<div class="abs" style="left:697.2px;width:106.5px;height:31px;top:901.8px;background:rgb(251, 252, 254);text-align:right;padding-right:17.5px;padding-top:8px;font-size:15.3px;color:#3c4043">30</div>
<div class="abs" style="left:808.3px;width:106.5px;height:31px;top:901.8px;background:rgb(251, 252, 254);text-align:right;padding-right:17.5px;padding-top:8px;font-size:15.3px;color:#3c4043">30</div>
<div class="abs" style="left:919.4px;width:106.5px;height:31px;top:901.8px;background:rgb(251, 252, 254);text-align:right;padding-right:17.5px;padding-top:8px;font-size:15.3px;color:#3c4043">31</div>
<div class="abs" style="left:1030.5px;width:106.5px;height:31px;top:901.8px;background:rgb(251, 252, 254);text-align:right;padding-right:17.5px;padding-top:8px;font-size:15.3px;color:#3c4043">27</div>
<div class="abs" style="left:1141.6px;width:106.5px;height:31px;top:901.8px;background:rgb(251, 252, 254);text-align:right;padding-right:17.5px;padding-top:8px;font-size:15.3px;color:#3c4043">31</div>
<div class="abs" style="left:1252.7px;width:106.5px;height:31px;top:901.8px;background:rgb(251, 252, 254);text-align:right;padding-right:17.5px;padding-top:8px;font-size:15.3px;color:#3c4043">32</div>
<div class="abs" style="left:1363.8px;width:106.5px;height:31px;top:901.8px;background:rgb(251, 252, 254);text-align:right;padding-right:17.5px;padding-top:8px;font-size:15.3px;color:#3c4043">27</div>
<div class="abs" style="left:1470px;width:101px;padding-right:8px;text-align:right;top:909.8px;font-size:15.3px;font-weight:bold;color:#3c4043">264</div>
<div class="abs" style="left:41px;top:941.4px;font-size:15.3px;font-weight:bold;color:#3c4043">総計</div>
<div class="abs" style="left:139.4px;width:108.5px;padding-right:17.5px;text-align:right;top:942.9px;font-size:15.3px;font-weight:bold;color:#3c4043">375</div>
<div class="abs" style="left:252.8px;width:106.5px;padding-right:17.5px;text-align:right;top:942.9px;font-size:15.3px;font-weight:bold;color:#3c4043">692</div>
<div class="abs" style="left:363.9px;width:106.5px;padding-right:17.5px;text-align:right;top:942.9px;font-size:15.3px;font-weight:bold;color:#3c4043">576</div>
<div class="abs" style="left:475.0px;width:106.5px;padding-right:17.5px;text-align:right;top:942.9px;font-size:15.3px;font-weight:bold;color:#3c4043">1,140</div>
<div class="abs" style="left:586.1px;width:106.5px;padding-right:17.5px;text-align:right;top:942.9px;font-size:15.3px;font-weight:bold;color:#3c4043">1,361</div>
<div class="abs" style="left:697.2px;width:106.5px;padding-right:17.5px;text-align:right;top:942.9px;font-size:15.3px;font-weight:bold;color:#3c4043">1,975</div>
<div class="abs" style="left:808.3px;width:106.5px;padding-right:17.5px;text-align:right;top:942.9px;font-size:15.3px;font-weight:bold;color:#3c4043">1,936</div>
<div class="abs" style="left:919.4px;width:106.5px;padding-right:17.5px;text-align:right;top:942.9px;font-size:15.3px;font-weight:bold;color:#3c4043">1,747</div>
<div class="abs" style="left:1030.5px;width:106.5px;padding-right:17.5px;text-align:right;top:942.9px;font-size:15.3px;font-weight:bold;color:#3c4043">2,150</div>
<div class="abs" style="left:1141.6px;width:106.5px;padding-right:17.5px;text-align:right;top:942.9px;font-size:15.3px;font-weight:bold;color:#3c4043">2,460</div>
<div class="abs" style="left:1252.7px;width:106.5px;padding-right:17.5px;text-align:right;top:942.9px;font-size:15.3px;font-weight:bold;color:#3c4043">2,432</div>
<div class="abs" style="left:1363.8px;width:106.5px;padding-right:17.5px;text-align:right;top:942.9px;font-size:15.3px;font-weight:bold;color:#3c4043">2,064</div>
<div class="abs" style="left:1470px;width:101px;padding-right:8px;text-align:right;top:942.9px;font-size:15.3px;font-weight:bold;color:#3c4043">18,908</div>
<div class="card" style="left:22px;top:999px;width:1568px;height:96px"></div>
<div class="abs" style="left:1520.5px;top:1110.5px;font-size:12.3px;font-weight:bold;color:#fff;-webkit-text-stroke:0.7px #555;letter-spacing:-0.55px">YOURLOGO</div><div class="abs" style="left:1535px;top:1123.5px;width:39px;height:1px;background:#aaa"></div>
</body></html>
